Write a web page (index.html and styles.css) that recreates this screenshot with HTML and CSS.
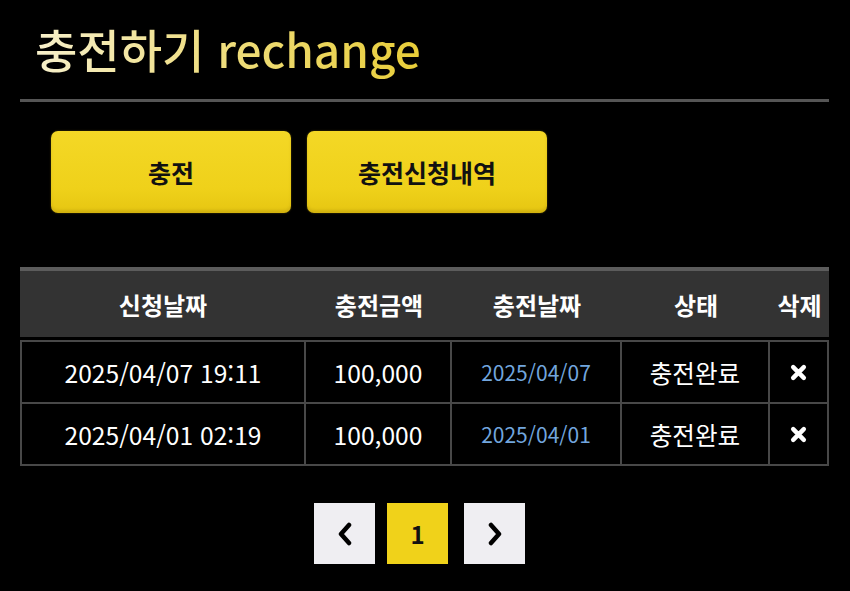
FILE: index.html
```html
<!DOCTYPE html>
<html lang="ko">
<head>
<meta charset="utf-8">
<title>충전하기</title>
<link rel="stylesheet" href="styles.css">
</head>
<body>
<div class="page">
  <header class="title-bar">
    <h1 class="title">충전하기 rechange</h1>
  </header>

  <nav class="tabs">
    <button class="tab-btn" type="button">충전</button>
    <button class="tab-btn" type="button">충전신청내역</button>
  </nav>

  <table class="history">
    <colgroup>
      <col class="c-req">
      <col class="c-amt">
      <col class="c-date">
      <col class="c-state">
      <col class="c-del">
    </colgroup>
    <thead>
      <tr>
        <th>신청날짜</th>
        <th>충전금액</th>
        <th>충전날짜</th>
        <th>상태</th>
        <th>삭제</th>
      </tr>
    </thead>
    <tbody>
      <tr>
        <td>2025/04/07 19:11</td>
        <td>100,000</td>
        <td class="paid">2025/04/07</td>
        <td>충전완료</td>
        <td><svg class="x-icon" viewBox="0 0 16 16" width="17" height="17"><path d="M3 3 L13 13 M13 3 L3 13" stroke="#fff" stroke-width="4.2" stroke-linecap="round"/></svg></td>
      </tr>
      <tr>
        <td>2025/04/01 02:19</td>
        <td>100,000</td>
        <td class="paid">2025/04/01</td>
        <td>충전완료</td>
        <td><svg class="x-icon" viewBox="0 0 16 16" width="17" height="17"><path d="M3 3 L13 13 M13 3 L3 13" stroke="#fff" stroke-width="4.2" stroke-linecap="round"/></svg></td>
      </tr>
    </tbody>
  </table>

  <div class="pager">
    <a class="pg pg-arrow" href="#"><svg viewBox="0 0 16 24" width="16" height="24"><path d="M12 3 L4 12 L12 21" fill="none" stroke="#000" stroke-width="4.5" stroke-linejoin="round" stroke-linecap="round"/></svg></a>
    <a class="pg pg-current" href="#">1</a>
    <a class="pg pg-arrow pg-next" href="#"><svg viewBox="0 0 16 24" width="16" height="24"><path d="M4 3 L12 12 L4 21" fill="none" stroke="#000" stroke-width="4.5" stroke-linejoin="round" stroke-linecap="round"/></svg></a>
  </div>
</div>
</body>
</html>
```

FILE: styles.css
```css
* {
  box-sizing: border-box;
}

html, body {
  margin: 0;
  background: #000;
}

body {
  font-family: "Noto Sans CJK KR", "Noto Sans", sans-serif;
  color: #fff;
}

.page {
  padding: 0 21px 0 20px;
}

/* heading with the underline rule */
.title-bar {
  padding: 16px 0 0 15px;
  height: 102px;
  border-bottom: 3px solid #555;
}

.title {
  margin: 0;
  font-size: 46px;
  font-weight: 500;
  line-height: 64px;
  display: inline-block;
  background: linear-gradient(90deg, #f7f0cb 0%, #f0e08a 40%, #e8cd38 100%);
  -webkit-background-clip: text;
  background-clip: text;
  color: transparent;
}

/* tab buttons */
.tabs {
  display: flex;
  gap: 16px;
  padding: 29px 0 0 31px;
}

.tab-btn {
  width: 240px;
  height: 82px;
  border: 0;
  border-radius: 7px;
  background: linear-gradient(180deg, #f4d826 0%, #efd11a 70%, #e6c612 100%);
  box-shadow: inset 0 -3px 3px rgba(120, 90, 0, 0.18), 0 0 2px rgba(240, 210, 30, 0.35);
  font-family: "Noto Sans CJK KR", sans-serif;
  font-size: 25px;
  font-weight: 700;
  color: #111;
  cursor: pointer;
}

/* history table */
.history {
  width: 809px;
  margin-top: 54px;
  table-layout: fixed;
  border-collapse: separate;
  border-spacing: 0;
}

.c-req { width: 286px; }
.c-amt { width: 146px; }
.c-date { width: 170px; }
.c-state { width: 148px; }
.c-del { width: 59px; }

.history th {
  height: 73px;
  background: #333;
  border-top: 4px solid #5c5c5c;
  border-bottom: 3px solid #000;
  font-size: 24px;
  font-weight: 700;
  color: #fff;
  padding: 0;
}

.history td {
  height: 62px;
  padding: 0;
  text-align: center;
  vertical-align: middle;
  font-size: 24.6px;
  font-weight: 400;
  color: #fff;
  background: #000;
  border-right: 2px solid #484848;
  border-bottom: 2px solid #484848;
}

.history tbody tr:first-child td {
  height: 64px;
  border-top: 2px solid #484848;
}

.history td:first-child {
  border-left: 2px solid #484848;
}

.history td.paid {
  font-size: 21px;
  color: #72a6de;
}

.x-icon {
  display: block;
  margin: 0 auto;
}

/* pagination */
.pager {
  display: flex;
  justify-content: center;
  gap: 12px;
  margin-top: 37px;
  padding-right: 10px;
}

.pg {
  width: 61px;
  height: 61px;
  display: flex;
  align-items: center;
  justify-content: center;
  text-decoration: none;
  font-size: 24px;
  font-weight: 700;
  color: #111;
}

.pg-next {
  margin-left: 4px;
}

.pg-arrow {
  background: #efeef2;
}

.pg-current {
  background: #f0d21a;
}
```
